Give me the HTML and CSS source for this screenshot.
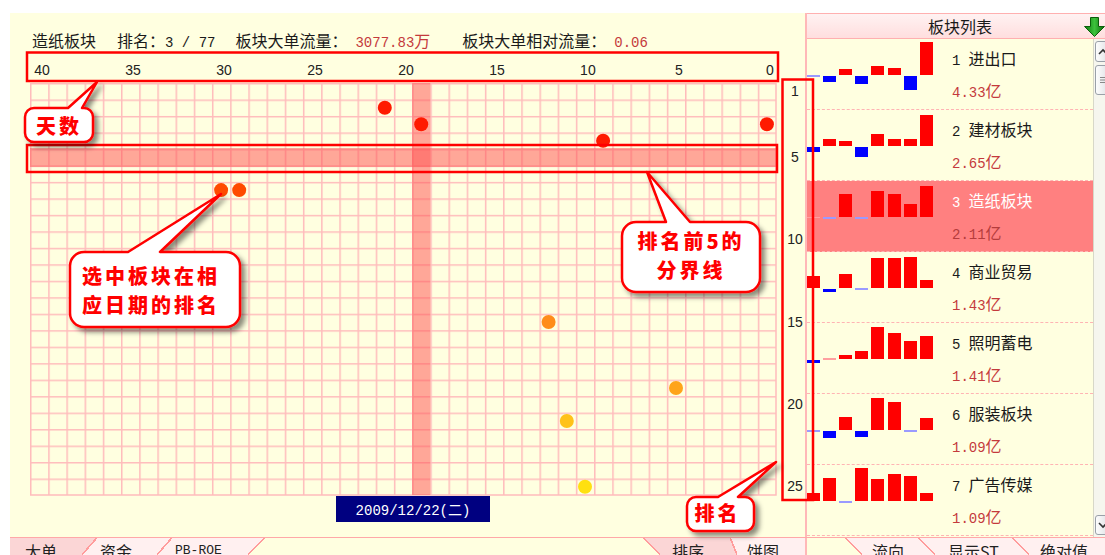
FILE: index.html
```html
<!DOCTYPE html>
<html lang="zh-CN">
<head>
    <meta charset="UTF-8">
    <title>板块排名</title>
    <link rel="stylesheet" href="styles.css">
</head>
<body>

<div class="app">
    <div class="main">
        <div class="left">
            <div class="info">
                <span class="title">造纸板块</span>
                <span class="lbl rank">排名：<span class="mono">3 / 77</span></span>
                <span class="lbl flow">板块大单流量：</span><span class="val"><span class="mono">3077.83</span>万</span>
                <span class="lbl rel">板块大单相对流量：</span><span class="val"><span class="mono">0.06</span></span>
            </div>
            <div class="axis">
                <div class="days">
                    <span>40</span><span>35</span><span>30</span><span>25</span><span>20</span>
                    <span>15</span><span>10</span><span>5</span><span>0</span>
                </div>
            </div>
            <div class="plot-row">
                <svg class="plot" width="747" height="413">
                    <defs>
                        <pattern id="grid" width="18.195" height="16.48" patternUnits="userSpaceOnUse">
                            <path d="M0 0V16.48M0 0H18.195" stroke="#ffbcbc" stroke-width="3" fill="none"/>
                        </pattern>
                    </defs>
                    <rect width="746" height="412" fill="url(#grid)"/>
                    <path d="M746 0V412.7M0 412H746" stroke="#ffbcbc" stroke-width="1.5" fill="none"/>
                    <!-- top 5 band and selected day -->
                    <rect class="hl" x="0" y="65" width="746" height="19"/>
                    <rect class="hl" x="382.1" y="0" width="18.2" height="412"/>
                    <circle cx="354.8" cy="24.7" r="7" fill="#ff1a00"/>
                    <circle cx="391.2" cy="41.2" r="7" fill="#ff1a00"/>
                    <circle cx="573.1" cy="57.7" r="7" fill="#ff1a00"/>
                    <circle cx="736.9" cy="41.2" r="7" fill="#ff1a00"/>
                    <circle cx="191.1" cy="107.1" r="7" fill="#ff4a00"/>
                    <circle cx="209.2" cy="107.1" r="7" fill="#ff4a00"/>
                    <circle cx="518.6" cy="239" r="7" fill="#ff8c1a"/>
                    <circle cx="646" cy="305" r="7" fill="#ffa41a"/>
                    <circle cx="536.8" cy="338" r="7" fill="#ffc21a"/>
                    <circle cx="555" cy="403.8" r="7" fill="#ffe010"/>
                </svg>
                <div class="ranks">
                    <span>1</span><span>5</span><span>10</span><span>15</span><span>20</span><span>25</span>
                </div>
            </div>
            <div class="foot">
                <div class="date">2009/12/22(二)</div>
            </div>
        </div>

        <div class="right">
            <div class="list-head">
                <span></span>
                <span class="list-title">板块列表</span>
                <svg class="down" width="21" height="20" viewBox="0 0 21 20">
                    <defs>
                        <linearGradient id="gr" x1="0" y1="0" x2="1" y2="0">
                            <stop offset="0" stop-color="#0c7a0c"/>
                            <stop offset="0.5" stop-color="#3cc23c"/>
                            <stop offset="1" stop-color="#0a6a0a"/>
                        </linearGradient>
                    </defs>
                    <path d="M6.5 0.5H14.5V9.5H20.5L10.5 19.5L0.5 9.5H6.5Z" fill="url(#gr)" stroke="#0b5e0b"/>
                </svg>
            </div>
            <div class="list-body">
                <div class="list">
                    <div class="item">
                        <svg class="spark" width="128" height="70">
                            <rect class="z" x="0" y="36" width="13" height="2"/>
                            <rect class="n" x="16" y="37" width="13" height="6"/>
                            <rect class="p" x="32" y="30" width="13" height="6"/>
                            <rect class="n" x="48" y="37" width="13" height="8"/>
                            <rect class="p" x="64" y="27" width="13" height="9"/>
                            <rect class="p" x="81" y="29" width="13" height="7"/>
                            <rect class="n" x="97" y="37" width="13" height="14"/>
                            <rect class="p" x="113" y="3" width="13" height="33"/>
                        </svg>
                        <div class="item-text">
                            <div class="item-name"><span class="mono no">1</span>进出口</div>
                            <div class="item-val"><span class="mono">4.33</span>亿</div>
                        </div>
                    </div>
                    <div class="item">
                        <svg class="spark" width="128" height="70">
                            <rect class="n" x="0" y="37" width="13" height="5"/>
                            <rect class="p" x="16" y="29" width="13" height="7"/>
                            <rect class="p" x="32" y="31" width="13" height="5"/>
                            <rect class="n" x="48" y="37" width="13" height="10"/>
                            <rect class="p" x="64" y="24" width="13" height="12"/>
                            <rect class="p" x="81" y="29" width="13" height="7"/>
                            <rect class="p" x="97" y="29" width="13" height="7"/>
                            <rect class="p" x="113" y="5" width="13" height="31"/>
                        </svg>
                        <div class="item-text">
                            <div class="item-name"><span class="mono no">2</span>建材板块</div>
                            <div class="item-val"><span class="mono">2.65</span>亿</div>
                        </div>
                    </div>
                    <div class="item sel">
                        <svg class="spark" width="128" height="70">
                            <rect class="zr" x="0" y="36" width="13" height="1"/>
                            <rect class="z" x="16" y="36" width="13" height="2"/>
                            <rect class="p" x="32" y="13" width="13" height="23"/>
                            <rect class="z" x="48" y="36" width="13" height="2"/>
                            <rect class="p" x="64" y="10" width="13" height="26"/>
                            <rect class="p" x="81" y="13" width="13" height="23"/>
                            <rect class="p" x="97" y="23" width="13" height="13"/>
                            <rect class="p" x="113" y="5" width="13" height="31"/>
                        </svg>
                        <div class="item-text">
                            <div class="item-name"><span class="mono no">3</span>造纸板块</div>
                            <div class="item-val"><span class="mono">2.11</span>亿</div>
                        </div>
                    </div>
                    <div class="item">
                        <svg class="spark" width="128" height="70">
                            <rect class="p" x="0" y="24" width="13" height="12"/>
                            <rect class="n" x="16" y="37" width="13" height="3"/>
                            <rect class="p" x="32" y="22" width="13" height="14"/>
                            <rect class="z" x="48" y="36" width="13" height="2"/>
                            <rect class="p" x="64" y="6" width="13" height="30"/>
                            <rect class="p" x="81" y="6" width="13" height="30"/>
                            <rect class="p" x="97" y="5" width="13" height="31"/>
                            <rect class="p" x="113" y="28" width="13" height="8"/>
                        </svg>
                        <div class="item-text">
                            <div class="item-name"><span class="mono no">4</span>商业贸易</div>
                            <div class="item-val"><span class="mono">1.43</span>亿</div>
                        </div>
                    </div>
                    <div class="item">
                        <svg class="spark" width="128" height="70">
                            <rect class="n" x="0" y="37" width="13" height="3"/>
                            <rect class="zr" x="16" y="35" width="13" height="2"/>
                            <rect class="p" x="32" y="32" width="13" height="4"/>
                            <rect class="p" x="48" y="28" width="13" height="8"/>
                            <rect class="p" x="64" y="4" width="13" height="32"/>
                            <rect class="p" x="81" y="10" width="13" height="26"/>
                            <rect class="p" x="97" y="18" width="13" height="18"/>
                            <rect class="p" x="113" y="13" width="13" height="23"/>
                        </svg>
                        <div class="item-text">
                            <div class="item-name"><span class="mono no">5</span>照明蓄电</div>
                            <div class="item-val"><span class="mono">1.41</span>亿</div>
                        </div>
                    </div>
                    <div class="item">
                        <svg class="spark" width="128" height="70">
                            <rect class="z" x="0" y="36" width="13" height="2"/>
                            <rect class="n" x="16" y="37" width="13" height="7"/>
                            <rect class="p" x="32" y="23" width="13" height="13"/>
                            <rect class="n" x="48" y="37" width="13" height="6"/>
                            <rect class="p" x="64" y="4" width="13" height="32"/>
                            <rect class="p" x="81" y="8" width="13" height="28"/>
                            <rect class="z" x="97" y="36" width="13" height="2"/>
                            <rect class="p" x="113" y="24" width="13" height="12"/>
                        </svg>
                        <div class="item-text">
                            <div class="item-name"><span class="mono no">6</span>服装板块</div>
                            <div class="item-val"><span class="mono">1.09</span>亿</div>
                        </div>
                    </div>
                    <div class="item">
                        <svg class="spark" width="128" height="70">
                            <rect class="p" x="0" y="28" width="13" height="8"/>
                            <rect class="p" x="16" y="13" width="13" height="23"/>
                            <rect class="z" x="32" y="36" width="13" height="2"/>
                            <rect class="p" x="48" y="3" width="13" height="33"/>
                            <rect class="p" x="64" y="14" width="13" height="22"/>
                            <rect class="p" x="81" y="9" width="13" height="27"/>
                            <rect class="p" x="97" y="11" width="13" height="25"/>
                            <rect class="p" x="113" y="28" width="13" height="8"/>
                        </svg>
                        <div class="item-text">
                            <div class="item-name"><span class="mono no">7</span>广告传媒</div>
                            <div class="item-val"><span class="mono">1.09</span>亿</div>
                        </div>
                    </div>
                </div>
                <div class="scroll">
                    <div class="sb-btn up">
                        <svg width="10" height="8"><path d="M1 6L5 2L9 6" stroke="#333" stroke-width="1.6" fill="none"/></svg>
                    </div>
                    <div class="sb-btn thumb">
                        <svg width="10" height="8"><path d="M2 1.5H9M2 4H9M2 6.5H9" stroke="#888" stroke-width="1"/></svg>
                    </div>
                    <div class="sb-gap"></div>
                    <div class="sb-btn dn">
                        <svg width="10" height="8"><path d="M1 2L5 6L9 2" stroke="#333" stroke-width="1.6" fill="none"/></svg>
                    </div>
                </div>
            </div>
        </div>
    </div>

    <div class="tabs">
        <div class="tabs-left">
            <div class="t on w1">大单</div>
            <div class="s fwd s1"></div>
            <div class="t w2">资金</div>
            <div class="s fwd s2"></div>
            <div class="t w3 pb">PB-ROE</div>
            <div class="s fwd s3"></div>
            <div class="fill"></div>
            <div class="s back s4"></div>
            <div class="t on w4">排序</div>
            <div class="s back s5"></div>
            <div class="t w5">饼图</div>
        </div>
        <div class="tabs-right">
            <div class="fill-r"></div>
            <div class="s back s6"></div>
            <div class="t w6">流向</div>
            <div class="s back s7"></div>
            <div class="t w7">显示ST</div>
            <div class="s back s7"></div>
            <div class="t w8">绝对值</div>
        </div>
    </div>
</div>

<!-- annotations drawn over the screenshot -->
<svg class="notes" width="1105" height="555">
    <defs>
        <filter id="sh" x="-30%" y="-30%" width="170%" height="170%">
            <feDropShadow dx="4" dy="4" stdDeviation="2.5" flood-color="#000" flood-opacity="0.45"/>
        </filter>
    </defs>
    <g fill="none" stroke="#f00" stroke-width="2.5">
        <rect x="27" y="52.5" width="751" height="28.5"/>
        <rect x="27" y="145" width="750" height="27"/>
        <rect x="782.5" y="79.5" width="30.5" height="420.5"/>
    </g>
    <g fill="#fff" stroke="#f00" stroke-width="2.5" stroke-linejoin="round" filter="url(#sh)">
        <path d="M34 108H68L97 82L82 108H84A9 9 0 0 1 93 117V133A9 9 0 0 1 84 142H34A9 9 0 0 1 25 133V117A9 9 0 0 1 34 108Z"/>
        <path d="M84 252H128L221 194L160 252H226A14 14 0 0 1 240 266V313A14 14 0 0 1 226 327H84A14 14 0 0 1 70 313V266A14 14 0 0 1 84 252Z"/>
        <path d="M636 222H666L647 172L690 222H746A14 14 0 0 1 760 236V278A14 14 0 0 1 746 292H636A14 14 0 0 1 622 278V236A14 14 0 0 1 636 222Z"/>
        <path d="M696 497H718L776 462L738 497H745A9 9 0 0 1 754 506V522A9 9 0 0 1 745 531H696A9 9 0 0 1 687 522V506A9 9 0 0 1 696 497Z"/>
    </g>
</svg>
<div class="note n1">天数</div>
<div class="note n2"><span>选中板块在相</span><span>应日期的排名</span></div>
<div class="note n3"><span>排名前5的</span><span>分界线</span></div>
<div class="note n4">排名</div>

</body>
</html>
```

FILE: styles.css
```css
html, body {
    margin: 0;
    overflow: hidden;
}
body {
    position: relative;
    width: 1095px;
    height: 542px;
    padding: 13px 0 0 10px;
    background: #fff;
    font-family: "Noto Sans CJK SC", sans-serif;
    font-size: 16px;
    color: #1a1a1a;
}
.mono {
    font-family: "Liberation Mono", "Noto Sans CJK SC", monospace;
    font-size: 14px;
}
.app {
    width: 1095px;
    height: 542px;
    display: flex;
    flex-direction: column;
    background: #ffffe0;
}
.main {
    display: flex;
    height: 524px;
}

/* left: ranking chart */
.left {
    width: 795px;
    padding-left: 20px;
    box-sizing: border-box;
    display: flex;
    flex-direction: column;
}
.info {
    height: 39px;
    padding: 19px 0 0 2px;
    box-sizing: border-box;
    display: flex;
    line-height: 16px;
    white-space: pre;
}
.lbl.rank { margin-left: 21px; }
.lbl.flow { margin-left: 20px; }
.lbl.rel { margin-left: 32px; }
.val {
    margin-left: 8px;
    color: #c43a3c;
}
.axis {
    height: 31px;
    padding: 10px 0 0 3px;
    box-sizing: border-box;
}
.days {
    width: 746px;
    display: flex;
    justify-content: space-between;
    font: 14px/16px "Liberation Sans", sans-serif;
    color: #222;
}
.days span {
    width: 18.195px;
    display: flex;
    justify-content: center;
}
.plot-row {
    height: 413px;
    display: flex;
}
.plot {
    display: block;
    flex-shrink: 0;
}
.hl {
    fill: #ff5050;
    fill-opacity: 0.5;
}
.ranks {
    width: 20px;
    padding-left: 8px;
    display: flex;
    flex-direction: column;
    font: 14px/16.48px "Liberation Sans", sans-serif;
    color: #222;
}
.ranks span {
    height: 16.48px;
    display: flex;
    justify-content: center;
    margin-top: 65.92px;
}
.ranks span:first-child { margin-top: 0; }
.ranks span:nth-child(2) { margin-top: 49.44px; }
.foot {
    height: 41px;
}
.date {
    margin-left: 306px;
    width: 154px;
    height: 26px;
    background: #000080;
    color: #fff;
    display: flex;
    align-items: center;
    justify-content: center;
    font-family: "Liberation Mono", "Noto Sans CJK SC", monospace;
    font-size: 14px;
}

/* right: sector list */
.right {
    width: 300px;
    border-left: 2px solid #ffb8b8;
    box-sizing: border-box;
    display: flex;
    flex-direction: column;
}
.list-head {
    height: 26px;
    border-top: 1px solid #ffb0b0;
    border-bottom: 1px solid #ffb0b0;
    box-sizing: border-box;
    background: linear-gradient(#fff2f2, #ffdede);
    display: grid;
    grid-template-columns: 1fr auto 1fr;
    line-height: 24px;
}
.list-title {
    padding-left: 8px;
}
.down {
    justify-self: end;
    margin-top: 3px;
    margin-right: 0;
}
.list-body {
    flex: 1;
    display: flex;
    overflow: hidden;
}
.list {
    width: 286px;
}
.item {
    height: 71px;
    display: flex;
    border-bottom: 1px dashed #ffb4b4;
    box-sizing: border-box;
}
.item.sel {
    background: #ff8080;
}
.spark {
    flex-shrink: 0;
    display: block;
}
.spark .p { fill: #ff0000; }
.spark .n { fill: #0000ff; }
.spark .z { fill: #9a9aff; }
.spark .zr { fill: #ffa0a0; }
.item-text {
    margin-left: 17px;
    padding-top: 10px;
    line-height: 18px;
}
.no {
    margin-right: 8px;
}
.item-val {
    margin-top: 11px;
    color: #c43a3c;
}
.sel .item-name { color: #fff; }
.sel .item-val { color: #b53c3c; }
.scroll {
    width: 12px;
    border-left: 1px solid #d8d8c8;
    box-sizing: border-box;
    background: #f6f6ee;
    display: flex;
    flex-direction: column;
    padding: 2px 0 2px 1px;
    overflow: hidden;
}
.sb-btn {
    width: 16px;
    flex-shrink: 0;
    border: 1px solid #9aa0a8;
    border-radius: 3px;
    background: linear-gradient(90deg, #fdfdfd, #dcdee2);
    box-sizing: border-box;
    display: flex;
    align-items: center;
    padding-left: 2px;
}
.sb-btn.up { height: 21px; }
.sb-btn.thumb { height: 30px; margin-top: 3px; }
.sb-btn.dn { height: 20px; }
.sb-gap { flex: 1; }

/* bottom tab strip */
.tabs {
    height: 18px;
    border-top: 1px solid #ffa8a8;
    box-sizing: border-box;
    display: flex;
    overflow: hidden;
    --y: #ffffe0;
    --on: #fbd6d6;
    --off: #fff0f0;
    --ln: #ff9c9c;
}
.tabs-left {
    width: 795px;
    display: flex;
}
.tabs-right {
    width: 300px;
    border-left: 2px solid #ffb8b8;
    box-sizing: border-box;
    display: flex;
}
.t {
    flex-shrink: 0;
    height: 26px;
    padding-top: 3px;
    box-sizing: border-box;
    line-height: 20px;
    background: var(--off);
    color: #222;
    white-space: nowrap;
}
.t.on { background: var(--on); }
.t.pb {
    font-family: "Liberation Mono", monospace;
    font-size: 13px;
}
.w1 { width: 72px; padding-left: 15px; }
.w2 { width: 60px; padding-left: 3px; }
.w3 { width: 76px; padding-left: 3px; }
.w4 { width: 70px; padding-left: 12px; }
.w5 { width: 68px; padding-left: 10px; }
.w6 { width: 56px; padding-left: 10px; }
.w7 { width: 77px; padding-left: 13px; }
.w8 { width: 76px; padding-left: 11px; }
.fill {
    width: 378px;
    flex-shrink: 0;
}
.fill-r {
    width: 38px;
    flex-shrink: 0;
}
.s {
    width: 15px;
    flex-shrink: 0;
}
.s.fwd {
    background: linear-gradient(to bottom right, var(--a) calc(50% - 1px), var(--ln) calc(50% - 1px), var(--ln) calc(50% + 0.6px), var(--b) calc(50% + 0.6px));
}
.s.back {
    background: linear-gradient(to bottom left, var(--b) calc(50% - 1px), var(--ln) calc(50% - 1px), var(--ln) calc(50% + 0.6px), var(--a) calc(50% + 0.6px));
}
.s1 { --a: var(--on); --b: var(--off); }
.s2 { --a: var(--off); --b: var(--off); }
.s3 { --a: var(--off); --b: var(--y); width: 17px; }
.s4 { --a: var(--y); --b: var(--on); width: 17px; }
.s5 { --a: var(--on); --b: var(--off); width: 7px; }
.s6 { --a: var(--y); --b: var(--off); width: 17px; }
.s7 { --a: var(--off); --b: var(--off); width: 17px; }

/* callouts */
.notes {
    position: absolute;
    left: 0;
    top: 0;
    pointer-events: none;
}
.note {
    position: absolute;
    box-sizing: border-box;
    display: flex;
    flex-direction: column;
    align-items: center;
    justify-content: center;
    color: #f00;
    font-weight: 900;
    font-size: 20px;
    line-height: 29px;
    letter-spacing: 3px;
    white-space: nowrap;
}
.n1 { left: 25px; top: 108px; width: 68px; height: 34px; }
.n2 { left: 70px; top: 252px; width: 170px; height: 75px; padding-right: 8px; }
.n3 { left: 622px; top: 222px; width: 138px; height: 70px; padding-bottom: 4px; }
.n4 { left: 687px; top: 497px; width: 67px; height: 34px; padding: 0 6px 4px 0; }
```
